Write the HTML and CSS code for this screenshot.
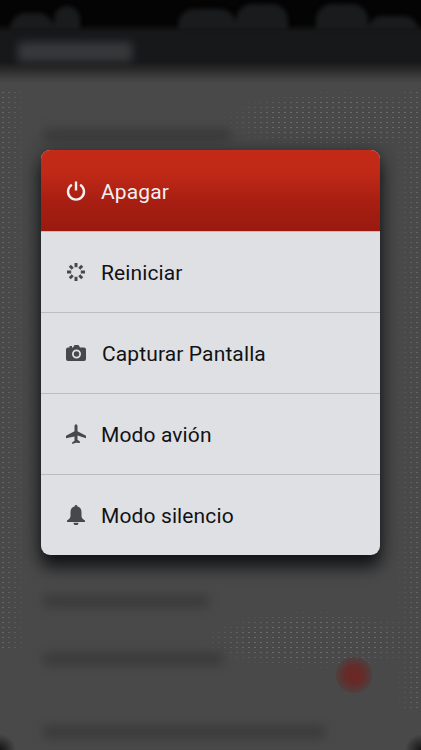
FILE: index.html
```html
<!DOCTYPE html>
<html lang="es">
<head>
<meta charset="utf-8">
<title>Menú de apagado</title>
<link rel="stylesheet" href="styles.css">
</head>
<body>
<div class="screen">
  <div class="backdrop">
    <div class="topbar">
      <div class="notch-row">
        <span class="bump bump-a"></span><span class="bump bump-b"></span><span class="gap"></span><span class="bump bump-c"></span><span class="bump bump-d"></span><span class="gap-small"></span><span class="bump bump-e"></span><span class="bump bump-f"></span>
      </div>
      <div class="title-blur"></div>
    </div>
    <div class="rows">
      <div class="line line-1"></div>
      <div class="line line-3"></div>
      <div class="row-with-dot">
        <div class="line line-4"></div>
        <div class="dot"></div>
      </div>
      <div class="line line-5"></div>
    </div>
  </div>
  <div class="menu-wrap">
    <ul class="menu">
      <li class="item item-danger">
        <svg class="icon" viewBox="0 0 20 20"><path d="M5.900 3.800A8 8 0 1 0 14.100 3.800" fill="none" stroke="currentColor" stroke-width="2.400"/><path d="M10 .5v9" fill="none" stroke="currentColor" stroke-width="2.400"/></svg>
        <span>Apagar</span>
      </li>
      <li class="item">
        <svg class="icon" viewBox="0 0 20 20"><g fill="none" stroke="currentColor" stroke-width="3"><path d="M10 1v4.200"/><path d="M10 14.800V19"/><path d="M1 10h4.200"/><path d="M14.800 10H19"/><path d="M3.800 3.800l2.900 2.900"/><path d="M13.300 13.300l2.900 2.900"/><path d="M3.800 16.200l2.900-2.900"/><path d="M13.300 6.700l2.900-2.900"/></g></svg>
        <span>Reiniciar</span>
      </li>
      <li class="item item-camera">
        <svg class="icon" viewBox="0 0 20 20"><path fill-rule="evenodd" d="M2 4.500h1.500V3h2.500v1.500h1L8.500 2h4L14 4.500h4a2 2 0 0 1 2 2V16a2 2 0 0 1-2 2H2a2 2 0 0 1-2-2V6.500a2 2 0 0 1 2-2zm8.500 2a4.500 4.500 0 1 0 0 9 4.500 4.500 0 0 0 0-9zm0 1.800a2.700 2.700 0 1 1 0 5.400 2.700 2.700 0 0 1 0-5.400z" fill="currentColor"/></svg>
        <span>Capturar Pantalla</span>
      </li>
      <li class="item">
        <svg class="icon" viewBox="0 0 20 20"><path d="M10 .2c1 0 1.500 1 1.500 2.200v4.800L20 11.800v2.400l-8.500-2.700v4.300l2.400 1.700v1.500L10 18.800 6.100 20v-1.500l2.400-1.700v-4.300L0 14.200v-2.400l8.500-4.600V2.400C8.500 1.200 9 .2 10 .2z" fill="currentColor"/></svg>
        <span>Modo avión</span>
      </li>
      <li class="item">
        <svg class="icon" viewBox="0 0 20 20"><path d="M10 0a1.400 1.400 0 0 1 1.400 1.400c3 .7 4.100 3.100 4.100 6v3.500c0 1.900 1.300 3 3.500 4.700V17H1v-1.400c2.200-1.700 3.500-2.800 3.500-4.700V7.400c0-2.900 1.100-5.300 4.100-6A1.400 1.400 0 0 1 10 0zM7.500 17.800h5a2.500 2.500 0 0 1-5 0z" fill="currentColor"/></svg>
        <span>Modo silencio</span>
      </li>
    </ul>
  </div>
</div>
</body>
</html>
```

FILE: styles.css
```css
* { box-sizing: border-box; }
html, body { margin: 0; padding: 0; }
body { width: 421px; height: 750px; overflow: hidden; background: #4a4a4a; font-family: Roboto, "Noto Sans", sans-serif; }
.screen { display: grid; width: 421px; height: 750px; overflow: hidden; }
.backdrop, .menu-wrap { grid-area: 1 / 1; }

.backdrop {
  position: relative; height: 750px; overflow: hidden;
  background:
    radial-gradient(circle at 0 100%, #141414 0, rgba(20,20,20,0) 16px),
    radial-gradient(circle at 100% 100%, #141414 0, rgba(20,20,20,0) 16px),
    #494949;
}
.backdrop::before {
  content: ""; position: absolute; inset: 0;
  background: radial-gradient(circle, rgba(200,200,200,.32) .45px, rgba(0,0,0,0) .8px) 0 0 / 6px 5px;
  -webkit-mask-image:
    linear-gradient(90deg, #000, rgba(0,0,0,0)),
    linear-gradient(270deg, #000, rgba(0,0,0,0)),
    radial-gradient(closest-side, #000 60%, rgba(0,0,0,0)),
    radial-gradient(closest-side, #000 60%, rgba(0,0,0,0));
  mask-image:
    linear-gradient(90deg, #000, rgba(0,0,0,0)),
    linear-gradient(270deg, #000, rgba(0,0,0,0)),
    radial-gradient(closest-side, #000 60%, rgba(0,0,0,0)),
    radial-gradient(closest-side, #000 60%, rgba(0,0,0,0));
  -webkit-mask-size: 30px 560px, 26px 620px, 240px 60px, 230px 60px;
  mask-size: 30px 560px, 26px 620px, 240px 60px, 230px 60px;
  -webkit-mask-position: 0 92px, 395px 92px, 220px 90px, 200px 610px;
  mask-position: 0 92px, 395px 92px, 220px 90px, 200px 610px;
  -webkit-mask-repeat: no-repeat;
  mask-repeat: no-repeat;
}
.topbar { position: relative; height: 82px; background: linear-gradient(#040405 0, #040405 24px, #17181a 32px, #17181a 62px, #303030 72px, #444 80px, #494949 86px); overflow: hidden; }
.notch-row { display: flex; align-items: flex-end; height: 30px; filter: blur(2px); padding-left: 10px; }
.bump { display: block; background: #1a1b1c; border-radius: 16px 16px 0 0; }
.bump-a { width: 44px; height: 17px; }
.bump-b { width: 26px; height: 24px; }
.gap { width: 98px; flex: none; }
.bump-c { width: 58px; height: 21px; }
.bump-d { width: 52px; height: 26px; }
.gap-small { width: 28px; flex: none; }
.bump-e { width: 52px; height: 26px; }
.bump-f { width: 50px; height: 14px; }
.title-blur { width: 114px; height: 20px; margin: 12px 0 0 18px; background: #37383a; filter: blur(4px); }

.rows { position: relative; display: flex; flex-direction: column; padding-left: 42px; }
.line { height: 14px; background: #3c3c3c; border-radius: 7px; filter: blur(5px); }
.line-1 { width: 190px; margin-top: 46px; }
.line-3 { width: 168px; margin-top: 452px; }
.row-with-dot { display: flex; align-items: flex-start; margin-top: 44px; }
.line-4 { width: 182px; }
.dot { width: 36px; height: 36px; margin: 5px 0 0 112px; border-radius: 50%; background: radial-gradient(circle, #6e2623 0, #642c29 36%, rgba(88,52,50,.7) 58%, rgba(74,74,74,0) 100%); }
.line-5 { width: 284px; margin-top: 32px; }

.menu-wrap { position: relative; padding: 150px 0 0 41px; height: 750px; }
.menu {
  list-style: none; margin: 0; padding: 0; width: 339px; height: 405px;
  border-radius: 9px; overflow: hidden; background: #dfe0e4;
  box-shadow: 0 12px 16px rgba(8,10,14,.8), 0 0 18px rgba(25,25,25,.45);
  display: flex; flex-direction: column;
}
.item {
  flex: 0 0 81px; display: flex; align-items: center; gap: 15px; padding-left: 25px;
  color: #111214; font-size: 21px; letter-spacing: .12px;
  border-top: 1px solid #bcbdc0;
}
.item span { padding-top: 2px; }
.item:first-child { border-top: 0; }
.item .icon { width: 20px; height: 20px; flex: none; color: #47484a; }
.item-danger { background: linear-gradient(#c32a18 0, #c12917 28%, #a81f12 62%, #991a10 100%); color: #eef0f2; }
.item-danger .icon { color: #eef0f2; }
.item-camera { gap: 16px; }
```
